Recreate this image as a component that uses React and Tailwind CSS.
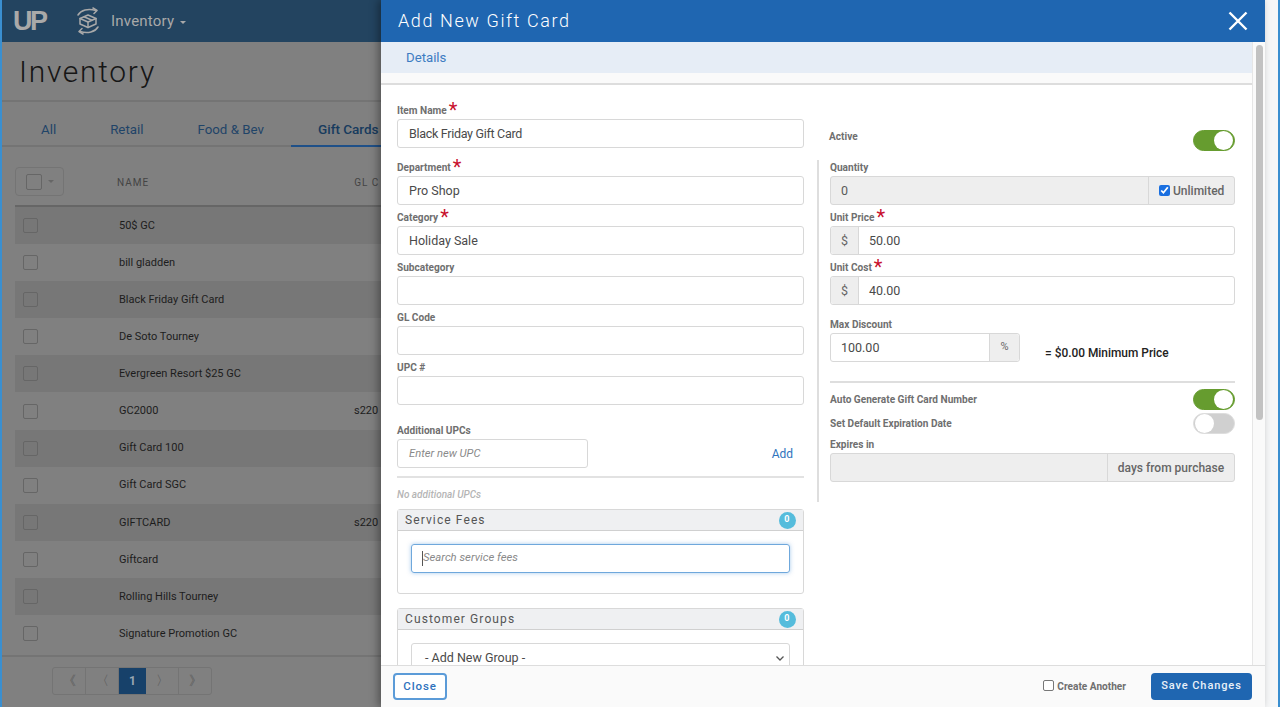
import React from "react";

const rows = [
  ["50$ GC", ""],
  ["bill gladden", ""],
  ["Black Friday Gift Card", ""],
  ["De Soto Tourney", ""],
  ["Evergreen Resort $25 GC", ""],
  ["GC2000", "s220"],
  ["Gift Card 100", ""],
  ["Gift Card SGC", ""],
  ["GIFTCARD", "s220"],
  ["Giftcard", ""],
  ["Rolling Hills Tourney", ""],
  ["Signature Promotion GC", ""],
];

function Star() {
  return <span className="text-[#c8102e] text-[20px] leading-[10px] font-normal ml-[2px] relative top-[-3px]">*</span>;
}

function Label({ children, req, cls = "h-[21px]" }) {
  return (
    <div className={`flex items-end pb-[1px] text-[10.1px] font-bold text-[#6f6f6f] leading-[14px] ${cls}`}>
      <span>{children}</span>
      {req && <Star />}
    </div>
  );
}

function Box({ children, cls = "" }) {
  return (
    <div className={`h-[29px] pt-[1px] border border-[#d8d8d8] rounded-[3px] bg-white flex items-center text-[12.5px] text-[#4a4a4a] ${cls}`}>
      {children}
    </div>
  );
}

function Field({ label, req, value, mt = "", tight }) {
  return (
    <div className={mt}>
      <Label req={req}>{label}</Label>
      <Box cls={`px-[11px] ${tight ? "tracking-[-0.3px]" : ""}`}>{value}</Box>
    </div>
  );
}

function Money({ label, value }) {
  return (
    <div>
      <Label req>{label}</Label>
      <div className="h-[29px] border border-[#d8d8d8] rounded-[3px] bg-white flex items-stretch text-[12.5px] text-[#4a4a4a]">
        <div className="w-[28px] pt-[1px] bg-[#eeeeee] border-r border-[#d8d8d8] flex items-center justify-center rounded-l-[3px] text-[#666666]">$</div>
        <div className="flex items-center pt-[1px] pl-[10px]">{value}</div>
      </div>
    </div>
  );
}

function Toggle({ on }) {
  return (
    <div className={`w-[42px] h-[21px] rounded-full flex items-center p-[1px] border ${on ? "bg-[#669c2f] border-[#669c2f] justify-end" : "bg-[#d0d0d0] border-[#dddddd] justify-start"}`}>
      <div className="w-[19px] h-[19px] rounded-full bg-white" />
    </div>
  );
}

function Badge() {
  return (
    <div className="w-[17px] h-[17px] rounded-full bg-[#55bcdc] text-white text-[9px] font-bold flex items-center justify-center">0</div>
  );
}

function Panel({ title, cls, children }) {
  return (
    <div className={`border border-[#d8d8d8] rounded-[3px] ${cls}`}>
      <div className="h-[21px] bg-[#eff0f2] border-b border-[#d0d0d0] flex items-center justify-between pl-[7px] pr-[7px] text-[12px] tracking-[1.1px] text-[#555555]">
        <span>{title}</span>
        <Badge />
      </div>
      {children}
    </div>
  );
}

function BoxIcon() {
  return (
    <svg width="28" height="28" viewBox="0 0 28 28" fill="none" stroke="#a9a9a9" strokeWidth="1.5" strokeLinejoin="round" strokeLinecap="round">
      <path d="M14 8 L22 11.5 L14 15 L6 11.5 Z" />
      <path d="M6 11.5 V17 L14 20.5 L22 17 V11.5" />
      <path d="M14 15 V20.5" />
      <path d="M10 9.8 L18 13.3" />
      <path d="M4 8 C7 3 14 1 22 3.5" />
      <path d="M19 1 L23 3.5 L20 6.5" />
      <path d="M24 20 C21 25 14 27 6 24.5" />
      <path d="M9 27 L5 24.5 L8 21.5" />
    </svg>
  );
}

function Pager() {
  const cell = "flex items-center justify-center text-[#555555] text-[13px] border-r border-[#747474] h-full";
  return (
    <div className="ml-[50px] w-[160px] h-[28px] border border-[#747474] rounded-[3px] flex items-center">
      <div className={`${cell} w-[33px]`}>《</div>
      <div className={`${cell} w-[33px]`}>〈</div>
      <div className="w-[27px] h-full bg-[#17416a] text-[#9aa7b3] text-[12px] font-bold flex items-center justify-center">1</div>
      <div className={`${cell} w-[33px]`}>〉</div>
      <div className="flex-1 flex items-center justify-center text-[#555555] text-[13px]">》</div>
    </div>
  );
}

function Background() {
  return (
    <div className="w-[381px] h-full shrink-0 bg-[#808080] border-l-2 border-[#3a8fd0] overflow-hidden flex flex-col">
      <div className="h-[42px] shrink-0 bg-[#234460] flex items-center text-[#a9a9a9]">
        <span className="ml-[11px] w-[37px] text-[27px] font-bold tracking-[-2.5px] leading-none font-['Liberation_Sans',sans-serif]">UP</span>
        <span className="ml-[24px]"><BoxIcon /></span>
        <span className="ml-[9px] text-[15px] tracking-[0.2px]">Inventory</span>
        <span className="ml-[6px] mt-[2px] w-0 h-0 border-l-[3px] border-r-[3px] border-t-[3px] border-l-transparent border-r-transparent border-t-[#a9a9a9]" />
      </div>
      <div className="h-[60px] shrink-0 border-b-2 border-[#747474] pl-[17px] pt-[11px] text-[30px] font-light tracking-[1.7px] leading-[38px] text-[#161616]">Inventory</div>
      <div className="h-[45px] shrink-0 border-b-2 border-[#747474] flex items-end text-[13.3px] text-[#1f4468] relative whitespace-nowrap">
        <div className="w-[289px] flex pl-[39px] pb-[5px]">
          <span>All</span>
          <span className="ml-[54px]">Retail</span>
          <span className="ml-[54px]">Food & Bev</span>
        </div>
        <div className="flex-1 h-[45px] mb-[-2px] border-b-[2px] border-[#1f5088] flex items-end pl-[27px] pb-[6px] text-[13.5px] font-medium text-[#173b5e]">
          Gift Cards
        </div>
      </div>
      <div className="h-[60px] shrink-0 ml-[13px] pt-[11px] border-b-2 border-[#666666] flex items-center text-[10px] tracking-[1px] text-[#444444] whitespace-nowrap overflow-hidden">
        <div className="w-[49px] h-[29px] border border-[#747474] rounded-[4px] flex items-center pl-[10px] gap-[6px]">
          <div className="w-[16px] h-[16px] border border-[#666666] rounded-[2px]" />
          <div className="w-0 h-0 border-l-[3px] border-r-[3px] border-t-[3px] border-l-transparent border-r-transparent border-t-[#666666]" />
        </div>
        <span className="ml-[53px] pt-[1px]">NAME</span>
        <span className="ml-[205px] pt-[1px]">GL C</span>
      </div>
      <div className="ml-[13px] flex-1 min-h-0">
        {rows.map(([n, c], i) => (
          <div key={n} className={`h-[37.1px] flex items-center text-[11px] text-[#1d1d1d] whitespace-nowrap ${i % 2 === 0 ? "bg-[#777777]" : ""}`}>
            <div className="ml-[8px] w-[15px] h-[15px] border border-[#666666] rounded-[2px]" />
            <span className="ml-[81px] w-[235px] pt-[1px]">{n}</span>
            <span className="pt-[1px]">{c}</span>
          </div>
        ))}
      </div>
      <div className="h-[52px] shrink-0 border-t-2 border-[#747474] pt-[10px]">
        <Pager />
      </div>
    </div>
  );
}

function LeftCol() {
  return (
    <div className="w-[407px] shrink-0 pt-[13px]">
      <Field label="Item Name" req value="Black Friday Gift Card" tight />
      <Field label="Department" req value="Pro Shop" mt="mt-[7px]" />
      <Field label="Category" req value="Holiday Sale" />
      <Field label="Subcategory" value="" />
      <Field label="GL Code" value="" />
      <Field label="UPC #" value="" />
      <div className="mt-[13px]">
        <Label>Additional UPCs</Label>
        <div className="flex items-center justify-between">
          <Box cls="w-[191px] px-[11px] italic text-[#8a8a8a] !text-[11.2px]">Enter new UPC</Box>
          <span className="mr-[11px] text-[12px] text-[#2f73bd]">Add</span>
        </div>
      </div>
      <div className="mt-[8px] border-t-2 border-[#e2e2e2]" />
      <div className="mt-[10px] text-[10px] italic font-medium text-[#b5b5b5] leading-[14px]">No additional UPCs</div>
      <Panel title="Service Fees" cls="mt-[7px] h-[85px]">
        <div className="mx-[13px] mt-[13px] h-[29px] border border-[#6fa8dc] rounded-[3px] shadow-[0_0_4px_rgba(80,150,220,0.5)] flex items-center pl-[10px] text-[11.3px] italic text-[#8a8a8a]">
          <span className="w-px h-[15px] bg-[#555555]" />Search service fees
        </div>
      </Panel>
      <Panel title="Customer Groups" cls="mt-[14px] h-[90px]">
        <div className="mx-[13px] mt-[13px] h-[29px] border border-[#d8d8d8] rounded-[3px] flex items-center justify-between px-[13px] pr-[3px] text-[12.5px] text-[#4a4a4a]">
          <span className="leading-[20px]">- Add New Group -</span>
          <svg width="12" height="12" viewBox="0 0 12 12" fill="none" stroke="#555555" strokeWidth="1.3"><path d="M2.5 4.5 L6 8 L9.5 4.5" /></svg>
        </div>
      </Panel>
    </div>
  );
}

function RightCol() {
  return (
    <div className="w-[418px] ml-[13px] shrink-0">
      <div className="h-[75px] pt-[45px] pl-[12px] flex justify-between items-start">
        <span className="text-[10.1px] font-bold text-[#6f6f6f] leading-[14px]">Active</span>
        <Toggle on />
      </div>
      <div className="h-[342px] border-l-2 border-[#dedede] pl-[11px]">
        <Label cls="h-[16px]">Quantity</Label>
        <div className="h-[29px] border border-[#d8d8d8] rounded-[3px] bg-[#eeeeee] flex items-stretch text-[12.5px] text-[#5a5a5a]">
          <div className="flex-1 flex items-center pt-[1px] pl-[10px]">0</div>
          <div className="w-[86px] border-l border-[#d8d8d8] flex items-center pl-[10px] gap-[3px] font-medium text-[#666666] text-[12px]">
            <input type="checkbox" readOnly checked className="w-[11px] h-[11px] accent-[#1a6fe0]" />
            <span>Unlimited</span>
          </div>
        </div>
        <Money label="Unit Price" value="50.00" />
        <Money label="Unit Cost" value="40.00" />
        <Label cls="h-[28px]">Max Discount</Label>
        <div className="flex items-start">
          <div className="w-[190px] h-[29px] border border-[#d8d8d8] rounded-[3px] flex items-stretch text-[12.5px] text-[#4a4a4a]">
            <div className="flex-1 flex items-center pt-[1px] pl-[10px]">100.00</div>
            <div className="w-[30px] bg-[#eeeeee] border-l border-[#d8d8d8] rounded-r-[3px] flex items-center justify-center text-[#666666] text-[11px]">%</div>
          </div>
          <span className="ml-[25px] mt-[13px] text-[11.9px] font-medium text-[#222222] leading-[14px]">= $0.00 Minimum Price</span>
        </div>
        <div className="mt-[19px] border-t-2 border-[#dedede]" />
        <div className="mt-[6px] flex items-center justify-between h-[21px]">
          <span className="text-[10.1px] font-bold text-[#6f6f6f]">Auto Generate Gift Card Number</span>
          <Toggle on />
        </div>
        <div className="mt-[3px] flex items-center justify-between h-[21px]">
          <span className="text-[10.1px] font-bold text-[#6f6f6f]">Set Default Expiration Date</span>
          <Toggle />
        </div>
        <div className="text-[10.1px] font-bold text-[#6f6f6f] leading-[14px] h-[19px] pt-[4px]">Expires in</div>
        <div className="h-[29px] border border-[#d8d8d8] rounded-[3px] bg-[#eeeeee] flex items-stretch text-[12px]">
          <div className="flex-1" />
          <div className="w-[127px] border-l border-[#d8d8d8] flex items-center justify-center font-medium text-[#666666]">days from purchase</div>
        </div>
      </div>
    </div>
  );
}

function Modal() {
  return (
    <div className="w-[884px] h-full shrink-0 bg-white flex flex-col shadow-[-3px_0_8px_rgba(0,0,0,0.35)] z-10">
      <div className="h-[42px] shrink-0 bg-[#1f66b1] flex items-center justify-between pl-[17px] pr-[17px] text-white">
        <span className="text-[18px] font-light tracking-[1.6px] pb-[2px]">Add New Gift Card</span>
        <svg width="20" height="20" viewBox="0 0 20 20" fill="none" stroke="#ffffff" strokeWidth="2.4"><path d="M1.5 1.5 L18.5 18.5 M18.5 1.5 L1.5 18.5" /></svg>
      </div>
      <div className="flex-1 min-h-0 flex">
        <div className="w-[872px] shrink-0 flex flex-col border-r border-[#e6e6e6] overflow-hidden">
          <div className="h-[31px] shrink-0 bg-[#e6edf6] pl-[25px] flex items-center text-[13.2px] text-[#3d7cc2]">Details</div>
          <div className="h-[12px] shrink-0 bg-[#fafafa] border-b-2 border-[#dddddd]" />
          <div className="flex-1 min-h-0 overflow-hidden flex pl-[16px]">
            <LeftCol />
            <RightCol />
          </div>
        </div>
        <div className="flex-1 bg-[#fafafa] pt-[3px] pl-[3px]">
          <div className="w-[7px] h-[375px] rounded-full bg-[#c2c2c2]" />
        </div>
      </div>
      <div className="h-[42px] shrink-0 bg-[#fafafa] border-t border-[#dddddd] flex items-center pl-[12px] pr-[13px]">
        <div className="w-[54px] h-[27px] border-2 border-[#5b9bd8] rounded-[4px] bg-white flex items-center justify-center text-[11.5px] font-medium tracking-[0.9px] text-[#2f73bd]">Close</div>
        <div className="ml-auto flex items-center text-[10.1px] font-bold text-[#6f6f6f]">
          <div className="w-[11px] h-[11px] border border-[#777777] rounded-[2px] bg-white mt-[-2px]" />
          <span className="ml-[3px] mt-[1px]">Create Another</span>
        </div>
        <div className="ml-[25px] w-[101px] h-[27px] bg-[#1f66b1] rounded-[4px] flex items-center justify-center text-[11px] font-medium tracking-[0.9px] text-[#e8f0f8]">Save Changes</div>
      </div>
    </div>
  );
}

export default function App() {
  return (
    <div className="w-[1280px] h-[707px] overflow-hidden flex font-['Roboto',sans-serif] bg-white">
      <Background />
      <Modal />
      <div className="flex-1 bg-[#f6f7f8] border-r-2 border-[#3a8fd0]" />
    </div>
  );
}
